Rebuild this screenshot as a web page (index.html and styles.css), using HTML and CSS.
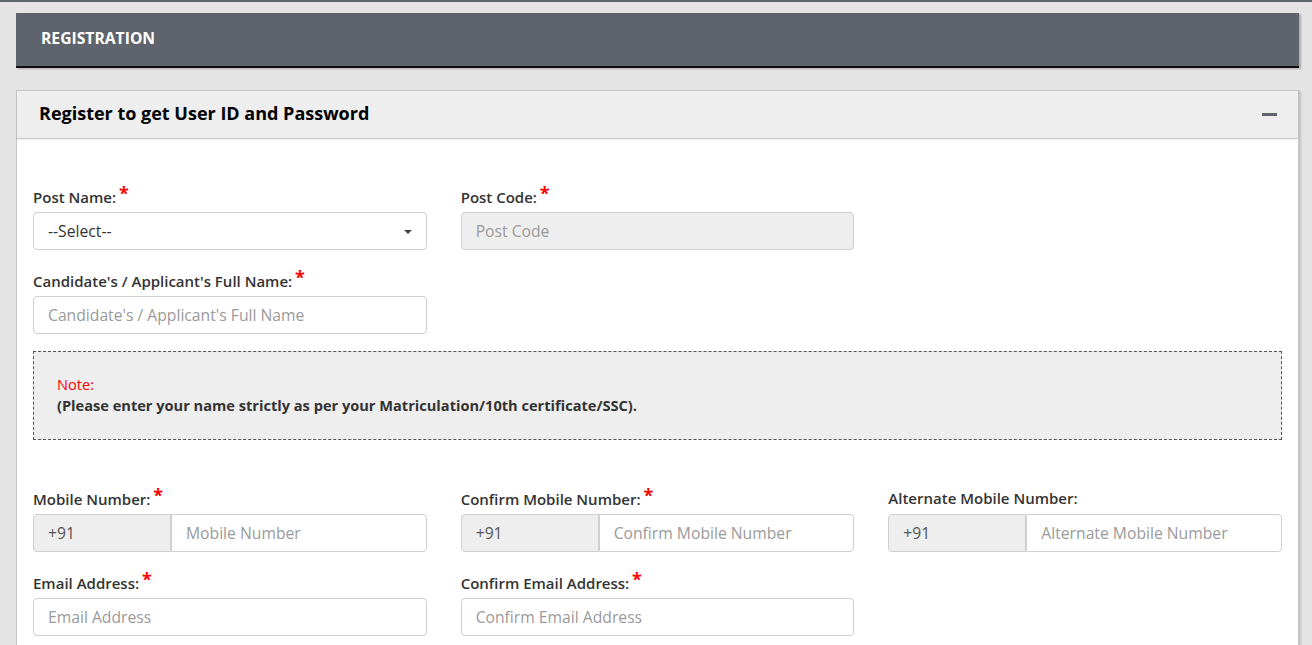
FILE: index.html
```html
<!DOCTYPE html>
<html>
<head>
<meta charset="utf-8">
<link rel="stylesheet" href="styles.css">
</head>
<body>
<div class="topline"></div>
<div class="page">
  <div class="titlebar">REGISTRATION</div>
  <div class="panel">
    <div class="panel-heading">
      <span class="panel-title">Register to get User ID and Password</span>
      <span class="minus"></span>
    </div>
    <div class="panel-body">
      <div class="grid">
        <div class="group">
          <label class="lbl">Post Name: <span class="req">*</span></label>
          <div class="control select">--Select--<span class="caret"></span></div>
        </div>
        <div class="group">
          <label class="lbl">Post Code: <span class="req">*</span></label>
          <div class="control disabled ph">Post Code</div>
        </div>
        <div></div>
        <div class="group">
          <label class="lbl">Candidate's / Applicant's Full Name: <span class="req">*</span></label>
          <div class="control ph">Candidate's / Applicant's Full Name</div>
        </div>
      </div>
      <div class="note">
        <div class="note-title">Note:</div>
        <div class="note-text">(Please enter your name strictly as per your Matriculation/10th certificate/SSC).</div>
      </div>
      <div class="grid">
        <div class="group">
          <label class="lbl">Mobile Number: <span class="req">*</span></label>
          <div class="igroup"><div class="addon">+91</div><div class="control ph grow">Mobile Number</div></div>
        </div>
        <div class="group">
          <label class="lbl">Confirm Mobile Number: <span class="req">*</span></label>
          <div class="igroup"><div class="addon">+91</div><div class="control ph grow">Confirm Mobile Number</div></div>
        </div>
        <div class="group">
          <label class="lbl">Alternate Mobile Number:</label>
          <div class="igroup"><div class="addon">+91</div><div class="control ph grow">Alternate Mobile Number</div></div>
        </div>
        <div class="group">
          <label class="lbl">Email Address: <span class="req">*</span></label>
          <div class="control ph">Email Address</div>
        </div>
        <div class="group">
          <label class="lbl">Confirm Email Address: <span class="req">*</span></label>
          <div class="control ph">Confirm Email Address</div>
        </div>
      </div>
    </div>
  </div>
</div>
</body>
</html>
```
FILE: styles.css
```css
* { box-sizing: border-box; }
html, body { margin: 0; padding: 0; }
body {
  background: #e4e4e4;
  font-family: "Open Sans", "Noto Sans", sans-serif;
  color: #333;
  overflow: hidden;
}
.topline { height: 2px; background: #5f636b; }
.page { padding: 11px 13px 0 16px; }
.titlebar {
  height: 55px;
  background: #5f636b;
  border-bottom: 2px solid #111;
  box-shadow: 2px 1px 2px rgba(0,0,0,0.25);
  color: #fff;
  font-weight: 700;
  font-size: 15.7px;
  padding: 14px 25px 0;
  line-height: 22px;
}
.panel {
  margin-top: 22px;
  background: #fff;
  border: 1px solid #c6c6c6;
  box-shadow: 2px 1px 2px rgba(0,0,0,0.15);
}
.panel-heading {
  height: 48px;
  background: #eeeeee;
  border-bottom: 1px solid #c8c8c8;
  display: flex;
  align-items: center;
  justify-content: space-between;
  padding: 0 21px 0 22px;
  box-shadow: 0 1px 2px rgba(0,0,0,0.08);
}
.panel-title { font-weight: 700; font-size: 18px; color: #000; position: relative; top: -2px; }
.minus { width: 15px; height: 3px; background: #5f636b; }
.panel-body { padding: 47px 16px 0 16px; }
.grid {
  display: grid;
  grid-template-columns: repeat(3, 1fr);
  column-gap: 34px;
}
.group { margin-bottom: 20px; }
.lbl {
  display: block;
  font-size: 15px;
  font-weight: 600;
  line-height: 20px;
  height: 21px;
  margin-bottom: 5px;
  color: #333;
  white-space: nowrap;
}
.req {
  color: #f00;
  font-size: 18px;
  font-weight: 700;
  position: relative;
  top: -3px;
  margin-left: -1px;
}
.control {
  height: 38px;
  border: 1px solid #cfcfcf;
  border-radius: 4px;
  padding: 6px 14px;
  font-size: 15.7px;
  line-height: 24px;
  color: #333;
  background: #fff;
  white-space: nowrap;
  overflow: hidden;
}
.ph { color: #9a9a9a; }
.disabled { background: #eeeeee; }
.select { position: relative; }
.caret {
  position: absolute;
  right: 14px;
  top: 17px;
  border-left: 4px solid transparent;
  border-right: 4px solid transparent;
  border-top: 4px solid #444;
}
.igroup { display: flex; }
.addon {
  width: 138px;
  height: 38px;
  background: #eeeeee;
  border: 1px solid #cfcfcf;
  border-radius: 4px 0 0 4px;
  padding: 6px 14px;
  font-size: 15.7px;
  line-height: 24px;
  color: #555;
  flex: none;
}
.grow { flex: 1; border-radius: 0 4px 4px 0; border-left: 1px solid #cfcfcf; }
.note {
  margin-top: -3px;
  margin-bottom: 48px;
  height: 89px;
  background: #eeeeee;
  border: 1px dashed #555;
  padding: 22px 23px 0;
}
.note-title { color: #f00; font-size: 14.6px; line-height: 21px; }
.note-text { font-weight: 700; font-size: 14.6px; line-height: 21px; color: #333; }
```
